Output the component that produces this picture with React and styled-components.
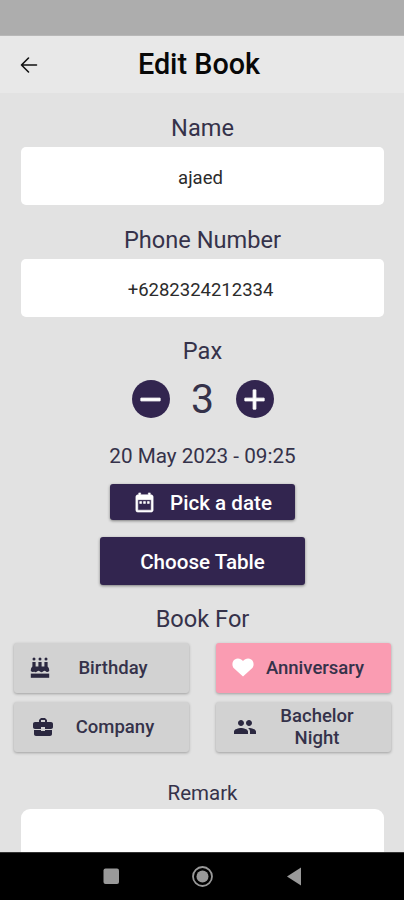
import { useState } from "react";
import styled, { createGlobalStyle } from "styled-components";
import { MdAdd, MdBusinessCenter, MdDateRange, MdPeople, MdRemove } from "react-icons/md";

const GlobalStyle = createGlobalStyle`
    * {
        box-sizing: border-box;
    }
    body {
        margin: 0;
        font-family: Roboto, "Liberation Sans", sans-serif;
        color: #35324a;
    }
    button, input {
        font-family: inherit;
        border: 0;
        padding: 0;
    }
`

const Screen = styled.div`
    width: 100%;
    height: 100vh;
    display: flex;
    flex-direction: column;
    overflow: hidden;
    background: #e2e2e2;
`

const StatusBar = styled.div`
    flex: 0 0 36px;
    background: #adadad;
    border-bottom: 1px solid #b8b8b8;
`

const Header = styled.header`
    flex: 0 0 57px;
    display: grid;
    grid-template-columns: 60px 1fr 60px;
    align-items: center;
    background: #e8e8e8;
`

const BackButton = styled.button`
    display: flex;
    justify-content: center;
    padding-right: 2px;
    background: none;
    color: #111;
`

const Title = styled.h1`
    margin: 0;
    padding: 0 6px 2px 0;
    color: #080808;
    font-size: 28.8px;
    font-weight: 500;
    line-height: 54px;
    text-align: center;
    white-space: nowrap;
`

const Form = styled.main`
    flex: 1;
    min-height: 0;
    overflow: hidden;
    display: flex;
    flex-direction: column;
    align-items: center;
    padding: 19px 20px 0 21px;
`

const Label = styled.label`
    flex: none;
    height: 32px;
    margin-top: ${(props) => props.$top || 0}px;
    font-size: ${(props) => props.$size || 23.6}px;
    line-height: 32px;
`

const Field = styled.input`
    flex: none;
    width: 100%;
    height: 58px;
    margin-top: 3px;
    padding: 3px 4px 0 0;
    border-radius: 5px;
    background: #fff;
    color: #2b2b2b;
    font-size: 18.5px;
    text-align: center;
`

const Counter = styled.div`
    flex: none;
    height: 38px;
    margin-top: 13px;
    display: flex;
    align-items: center;
    gap: 17px;
`

const RoundButton = styled.button`
    width: 38px;
    height: 38px;
    display: flex;
    justify-content: center;
    align-items: center;
    border-radius: 50%;
    background: #32254f;
    color: #fff;
    font-size: 33px;
    & path:last-child {
        stroke: currentColor;
        stroke-width: 0.7;
    }
`

const Count = styled.span`
    width: 32px;
    font-size: 41px;
    line-height: 38px;
    text-align: center;
`

const ActionButton = styled.button`
    flex: none;
    width: ${(props) => props.$width}px;
    height: ${(props) => props.$height}px;
    margin-top: ${(props) => props.$top}px;
    padding-top: 1px;
    display: flex;
    justify-content: center;
    align-items: center;
    gap: 14px;
    border-radius: 3px;
    background: #32254f;
    box-shadow: 0 1px 3px rgba(0, 0, 0, 0.45);
    color: #fff;
    font-size: 20.6px;
    font-weight: 500;
    & svg {
        font-size: 23px;
    }
    & path:last-child {
        stroke: currentColor;
        stroke-width: 0.6;
    }
`

const Occasions = styled.div`
    flex: none;
    width: 377px;
    margin-top: 8px;
    display: grid;
    grid-template-columns: 175px 175px;
    grid-auto-rows: 50px;
    gap: 9px 27px;
`

const Occasion = styled.button`
    display: grid;
    grid-template-columns: 26px 1fr;
    align-items: center;
    padding: 0 ${(props) => props.$right}px 1px ${(props) => props.$left}px;
    border-radius: 3px;
    background: ${(props) => (props.$active ? "#fa9cb2" : "#d2d2d2")};
    box-shadow: 0 1px 3px rgba(0, 0, 0, 0.3);
    color: #35324a;
    & svg {
        justify-self: center;
        color: ${(props) => (props.$active ? "#fff" : "#2b2840")};
        font-size: 24px;
    }
    & span {
        justify-self: end;
        width: 118px;
        padding: 0 ${(props) => (props.$wrap ? 20 : 0)}px;
        font-size: 18.5px;
        font-weight: 500;
        line-height: 22px;
    }
`

const Remark = styled.div`
    flex: none;
    width: 100%;
    height: 120px;
    border-radius: 9px;
    background: #fff;
`

const NavBar = styled.nav`
    flex: 0 0 48px;
    display: flex;
    justify-content: center;
    align-items: center;
    background: #000;
    border-top: 1px solid #333;
`

function BackArrow() {
    return (
        <svg width="18" height="18" viewBox="0 0 18 18" fill="none" stroke="currentColor" strokeWidth="1.6" strokeLinecap="round" strokeLinejoin="round">
            <path d="M16.5 9 H1.5 M8.5 2 L1.5 9 L8.5 16" />
        </svg>
    );
}

function Cake() {
    return (
        <svg width="20" height="22" viewBox="0 0 20 22" fill="currentColor">
            <circle cx="4" cy="2" r="1.5" />
            <circle cx="10" cy="2" r="1.5" />
            <circle cx="16" cy="2" r="1.5" />
            <path d="M2.4 5 H5.6 V9.5 H8.4 V5 H11.6 V9.5 H14.4 V5 H17.6 V9.5 Q19.2 10.5 19.2 13 V14 Q17.5 15.8 16 14.5 Q14.5 13 13 14.5 Q11.5 15.8 10 14.5 Q8.5 13 7 14.5 Q5.5 15.8 4 14.5 Q2.7 15.8 0.8 14 V13 Q0.8 10.5 2.4 9.5 Z" />
            <path d="M0.8 16.6 H19.2 V20.8 H0.8 Z" />
        </svg>
    );
}

function Heart() {
    return (
        <svg width="22" height="19" viewBox="0 0 22 19" fill="currentColor">
            <path d="M11 18.5 L2.2 10.5 C-0.5 7.8 0 3.2 2.8 1.5 C5.5 -0.2 9 0.6 11 3 C13 0.6 16.5 -0.2 19.2 1.5 C22 3.2 22.5 7.8 19.8 10.5 Z" />
        </svg>
    );
}

const occasions = [
    { name: "Birthday", icon: Cake, left: 13, right: 17 },
    { name: "Anniversary", icon: Heart, left: 14, right: 17 },
    { name: "Company", icon: MdBusinessCenter, left: 16, right: 20 },
    { name: "Bachelor Night", icon: MdPeople, left: 16, right: 20, wrap: true },
];

function App() {
    const [name, setName] = useState("ajaed");
    const [phone, setPhone] = useState("+6282324212334");
    const [pax, setPax] = useState(3);
    const [selected, setSelected] = useState("Anniversary");

    return (
        <Screen>
            <GlobalStyle />
            <StatusBar />
            <Header>
                <BackButton><BackArrow /></BackButton>
                <Title>Edit Book</Title>
            </Header>
            <Form>
                <Label>Name</Label>
                <Field value={name} onChange={(e) => setName(e.target.value)} />
                <Label $top={19}>Phone Number</Label>
                <Field value={phone} onChange={(e) => setPhone(e.target.value)} />
                <Label $top={18}>Pax</Label>
                <Counter>
                    <RoundButton onClick={() => setPax(Math.max(1, pax - 1))}><MdRemove /></RoundButton>
                    <Count>{pax}</Count>
                    <RoundButton onClick={() => setPax(pax + 1)}><MdAdd /></RoundButton>
                </Counter>
                <Label as="div" $size={20.7} $top={22}>20 May 2023 - 09:25</Label>
                <ActionButton $width={185} $height={36} $top={12}>
                    <MdDateRange />
                    Pick a date
                </ActionButton>
                <ActionButton $width={205} $height={48} $top={17}>Choose Table</ActionButton>
                <Label as="div" $top={18}>Book For</Label>
                <Occasions>
                    {occasions.map(({ name: title, icon: Icon, left, right, wrap }) => (
                        <Occasion
                            key={title}
                            $active={selected === title}
                            $left={left}
                            $right={right}
                            $wrap={wrap}
                            onClick={() => setSelected(title)}
                        >
                            <Icon />
                            <span>{title}</span>
                        </Occasion>
                    ))}
                </Occasions>
                <Label $size={20.5} $top={25}>Remark</Label>
                <Remark />
            </Form>
            <NavBar>
                <svg width="200" height="24" viewBox="0 0 200 24" fill="#999">
                    <rect x="1.5" y="3.5" width="15.5" height="15.5" rx="2" />
                    <circle cx="100.5" cy="11.5" r="9.5" fill="none" stroke="#999" strokeWidth="1.8" />
                    <circle cx="100.5" cy="11.5" r="6" />
                    <path d="M185 11.5 L199 2.5 V20.5 Z" />
                </svg>
            </NavBar>
        </Screen>
    );
}

export default App;
